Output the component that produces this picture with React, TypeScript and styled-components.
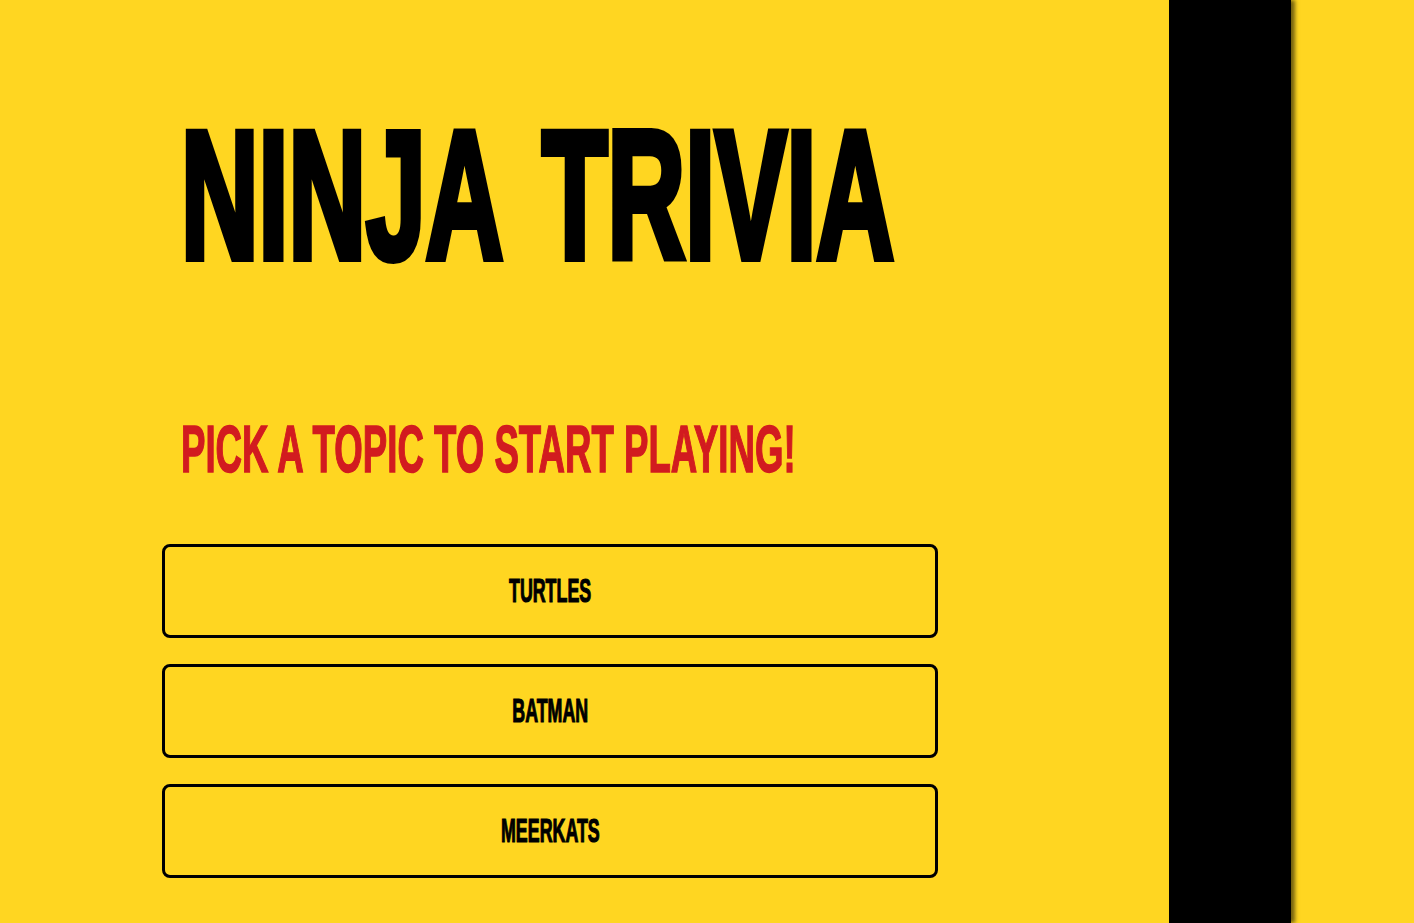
import React from "react";
import styled, { createGlobalStyle } from "styled-components";

const Global = createGlobalStyle`
  html, body { margin: 0; padding: 0; background: #ffd621; }
  body { font-family: "Liberation Sans", Arial, sans-serif; overflow: hidden; }
  #root { min-height: 100vh; }
`;

const Page = styled.div`
  display: grid;
  grid-template-columns: 1169px 122px 1fr;
  min-height: 923px;
  background: #ffd621;
`;

const Main = styled.main`
  display: flex;
  flex-direction: column;
  padding: 104px 0 0 162px;
`;

const Stripe = styled.div`
  background: #000;
  box-shadow: 4px 0 4px rgba(0, 0, 0, 0.55);
  position: relative;
  z-index: 1;
`;

const Filler = styled.div`
  background: #ffd621;
`;

const Condensed = styled.span<{ $scale: number }>`
  display: inline-block;
  white-space: nowrap;
  transform: scaleX(${(p) => p.$scale});
  transform-origin: left center;
`;

const Title = styled.h1`
  margin: 0 0 0 19px;
  font-size: 182px;
  line-height: 1;
  font-weight: 700;
  color: #000;
  word-spacing: 22px;
  -webkit-text-stroke: 8px #000;
`;

const Subtitle = styled.h2`
  margin: 130px 0 0 19px;
  font-size: 66px;
  line-height: 1;
  font-weight: 700;
  color: #d21b1f;
  -webkit-text-stroke: 1.5px #d21b1f;
`;

const Topics = styled.div`
  display: flex;
  flex-direction: column;
  gap: 26px;
  margin-top: 62px;
  width: 776px;
`;

const TopicButton = styled.button`
  display: flex;
  align-items: center;
  justify-content: center;
  box-sizing: border-box;
  height: 94px;
  width: 100%;
  background: transparent;
  border: 3px solid #000;
  border-radius: 8px;
  font-family: "Liberation Sans", Arial, sans-serif;
  font-weight: 700;
  font-size: 33px;
  color: #000;
  -webkit-text-stroke: 1.2px #000;
  cursor: pointer;
  padding: 0;
`;

const ButtonLabel = styled.span`
  display: inline-block;
  transform: scaleX(0.54);
`;

const topics = ["TURTLES", "BATMAN", "MEERKATS"];

export default function App() {
  return (
    <>
      <Global />
      <Page>
        <Main>
          <Title>
            <Condensed $scale={0.59}>NINJA TRIVIA</Condensed>
          </Title>
          <Subtitle>
            <Condensed $scale={0.555}>PICK A TOPIC TO START PLAYING!</Condensed>
          </Subtitle>
          <Topics>
            {topics.map((t) => (
              <TopicButton key={t}>
                <ButtonLabel>{t}</ButtonLabel>
              </TopicButton>
            ))}
          </Topics>
        </Main>
        <Stripe />
        <Filler />
      </Page>
    </>
  );
}
